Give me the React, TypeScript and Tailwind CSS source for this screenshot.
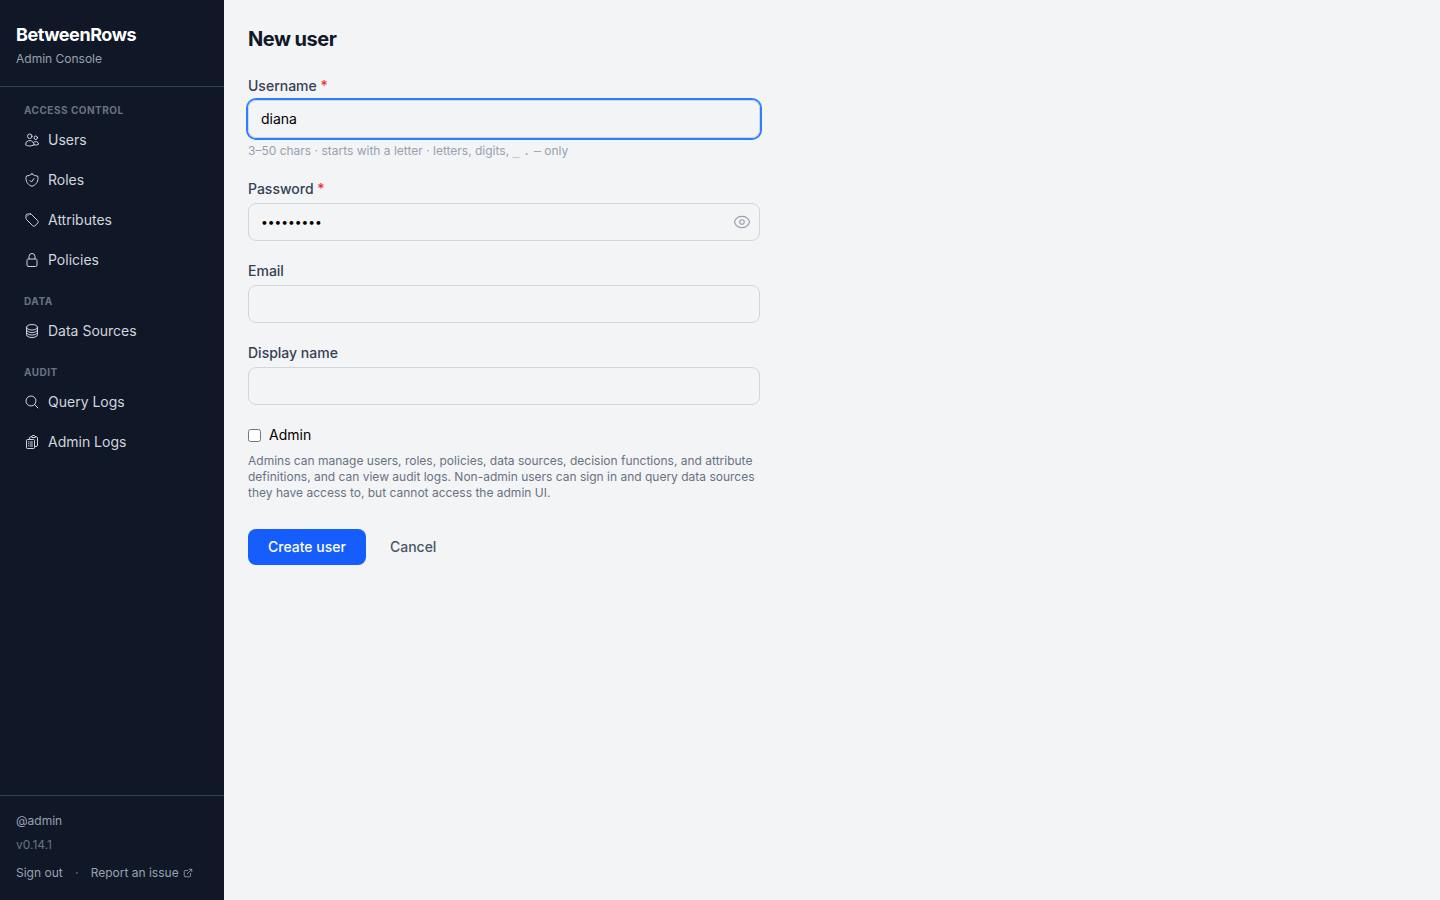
import { useState } from 'react'
import type { ReactNode } from 'react'
import type { IconType } from 'react-icons'
import { ExternalLink } from 'lucide-react'
import {
  HiOutlineCircleStack,
  HiOutlineClipboardDocumentList,
  HiOutlineEye,
  HiOutlineLockClosed,
  HiOutlineMagnifyingGlass,
  HiOutlineShieldCheck,
  HiOutlineTag,
  HiOutlineUsers,
} from 'react-icons/hi2'

type NavItem = { label: string; href: string; icon: IconType }
type NavSection = { title: string; items: NavItem[] }

const sections: NavSection[] = [
  {
    title: 'Access Control',
    items: [
      { label: 'Users', href: '#users', icon: HiOutlineUsers },
      { label: 'Roles', href: '#roles', icon: HiOutlineShieldCheck },
      { label: 'Attributes', href: '#attributes', icon: HiOutlineTag },
      { label: 'Policies', href: '#policies', icon: HiOutlineLockClosed },
    ],
  },
  {
    title: 'Data',
    items: [{ label: 'Data Sources', href: '#data-sources', icon: HiOutlineCircleStack }],
  },
  {
    title: 'Audit',
    items: [
      { label: 'Query Logs', href: '#query-logs', icon: HiOutlineMagnifyingGlass },
      { label: 'Admin Logs', href: '#admin-logs', icon: HiOutlineClipboardDocumentList },
    ],
  },
]

function Sidebar() {
  return (
    <aside className="flex w-56 shrink-0 flex-col bg-gray-900">
      <div className="border-b border-gray-700 px-4 pt-[21px] pb-[19px]">
        <div className="text-lg leading-7 font-bold tracking-tight text-white">BetweenRows</div>
        <div className="mt-0.5 text-xs text-gray-400">Admin Console</div>
      </div>
      <nav className="flex flex-1 flex-col gap-4 px-3 py-4">
        {sections.map((section) => (
          <div key={section.title}>
            <h2 className="mb-1 px-3 text-[10px] leading-[15px] font-bold tracking-wider text-gray-500 uppercase">
              {section.title}
            </h2>
            <ul className="flex flex-col gap-1">
              {section.items.map(({ label, href, icon: Icon }) => (
                <li key={label}>
                  <a
                    href={href}
                    className="flex items-center gap-2 rounded-lg px-3 py-2 text-sm text-gray-300 hover:bg-gray-800"
                  >
                    <Icon className="size-4 shrink-0" />
                    {label}
                  </a>
                </li>
              ))}
            </ul>
          </div>
        ))}
      </nav>
      <div className="border-t border-gray-700 px-4 pt-[17px] pb-[19px] text-xs text-gray-400">
        <div>@admin</div>
        <div className="mt-2 text-gray-500">v0.14.1</div>
        <div className="mt-3 flex items-center gap-3">
          <button type="button" className="hover:text-white">
            Sign out
          </button>
          <span className="font-bold text-gray-600">·</span>
          <a href="#report" className="flex items-center gap-1 hover:text-white">
            Report an issue
            <ExternalLink className="size-2.5" strokeWidth={2} />
          </a>
        </div>
      </div>
    </aside>
  )
}

function Field({
  id,
  label,
  required,
  children,
}: {
  id: string
  label: string
  required?: boolean
  children: ReactNode
}) {
  return (
    <div>
      <label htmlFor={id} className="mb-1 block text-sm font-medium text-gray-700">
        {label}
        {required && <span className="text-red-500"> *</span>}
      </label>
      {children}
    </div>
  )
}

function Code({ children }: { children: ReactNode }) {
  return <code className="font-['DejaVu_Sans_Mono',monospace] leading-none">{children}</code>
}

const inputClass =
  'block w-full rounded-lg border border-gray-300 px-3 py-2 text-black outline-none focus:ring-2 focus:ring-blue-500'

export default function App() {
  const [username, setUsername] = useState('diana')
  const [password, setPassword] = useState('password1')
  const [email, setEmail] = useState('')
  const [displayName, setDisplayName] = useState('')
  const [visible, setVisible] = useState(false)
  const [admin, setAdmin] = useState(false)

  return (
    <div className="flex min-h-screen bg-gray-100 font-['Inter',sans-serif]">
      <Sidebar />
      <main className="flex-1 p-6">
        <h1 className="mb-[22px] text-xl leading-[30px] font-bold tracking-tight text-gray-900">New user</h1>
        <form className="flex max-w-lg flex-col gap-5" onSubmit={(e) => e.preventDefault()}>
          <Field id="username" label="Username" required>
            <input
              id="username"
              type="text"
              value={username}
              onChange={(e) => setUsername(e.target.value)}
              className={`${inputClass} text-sm ring-2 ring-blue-500`}
            />
            <p className="mt-1 text-xs leading-[17px] text-gray-400">
              3–50 chars · starts with a letter · letters, digits, <Code>_</Code> <Code>.</Code>{' '}
              <Code>–</Code> only
            </p>
          </Field>
          <Field id="password" label="Password" required>
            <div className="relative">
              <input
                id="password"
                type={visible ? 'text' : 'password'}
                value={password}
                onChange={(e) => setPassword(e.target.value)}
                className={`${inputClass} pr-10 ${visible ? 'text-sm' : 'text-xs leading-5'}`}
              />
              <button
                type="button"
                aria-label="Show password"
                onClick={() => setVisible(!visible)}
                className="absolute inset-y-0 right-0 flex items-center px-[9px] text-gray-400"
              >
                <HiOutlineEye className="size-[18px]" />
              </button>
            </div>
          </Field>
          <Field id="email" label="Email">
            <input
              id="email"
              type="email"
              value={email}
              onChange={(e) => setEmail(e.target.value)}
              className={`${inputClass} text-sm`}
            />
          </Field>
          <Field id="display-name" label="Display name">
            <input
              id="display-name"
              type="text"
              value={displayName}
              onChange={(e) => setDisplayName(e.target.value)}
              className={`${inputClass} text-sm`}
            />
          </Field>
          <div>
            <label className="flex items-center gap-2 text-sm text-black">
              <input type="checkbox" checked={admin} onChange={(e) => setAdmin(e.target.checked)} />
              Admin
            </label>
            <p className="mt-2 text-xs text-gray-500">
              Admins can manage users, roles, policies, data sources, decision functions, and attribute
              definitions, and can view audit logs. Non-admin users can sign in and query data sources
              they have access to, but cannot access the admin UI.
            </p>
          </div>
          <div className="flex gap-3 pt-2">
            <button
              type="submit"
              className="rounded-lg bg-blue-600 px-5 py-2 text-sm font-medium text-white hover:bg-blue-700"
            >
              Create user
            </button>
            <button type="button" className="rounded-lg px-3 py-2 text-sm font-medium text-gray-600">
              Cancel
            </button>
          </div>
        </form>
      </main>
    </div>
  )
}
